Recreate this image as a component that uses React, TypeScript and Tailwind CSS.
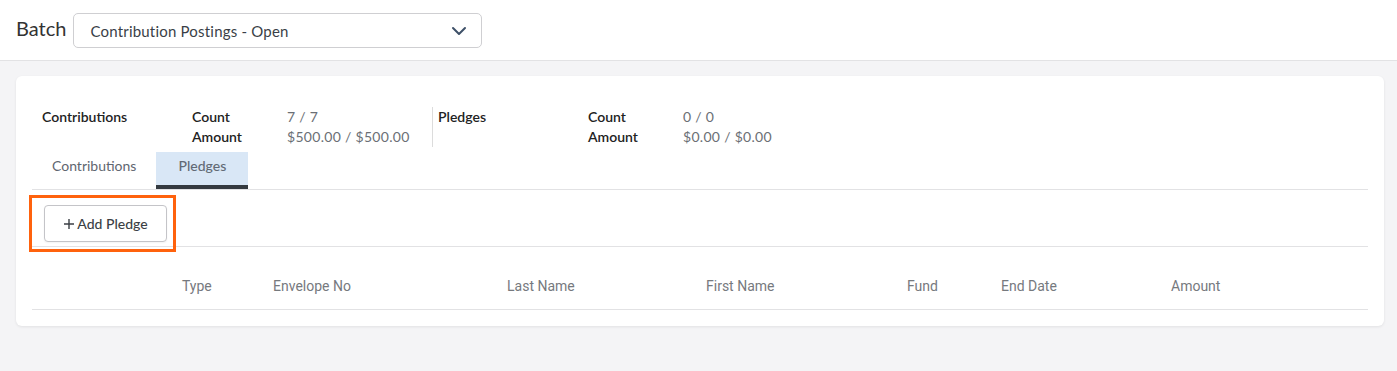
import React from 'react';

const cols = [
  { label: 'Type', w: 'w-[91px]' },
  { label: 'Envelope No', w: 'w-[234px]' },
  { label: 'Last Name', w: 'w-[199px]' },
  { label: 'First Name', w: 'w-[201px]' },
  { label: 'Fund', w: 'w-[94px]' },
  { label: 'End Date', w: 'w-[170px]' },
  { label: 'Amount', w: 'w-[100px]' },
];

const Summary: React.FC<{ title: string; count: string; amount: string }> = ({ title, count, amount }) => (
  <div className="flex text-[14px] leading-[20px]">
    <div className="w-[150px] font-semibold text-[#222]">{title}</div>
    <div className="w-[95px] font-semibold text-[#222]">
      <div>Count</div>
      <div>Amount</div>
    </div>
    <div className="text-[#6b6f75] tracking-[0.3px]">
      <div>{count}</div>
      <div>{amount}</div>
    </div>
  </div>
);

const App: React.FC = () => {
  return (
    <div className="w-[1397px] h-[371px] bg-[#f4f4f6] font-['Lato','Open_Sans',sans-serif] overflow-hidden">
      {/* Batch header */}
      <div className="h-[61px] bg-white border-b border-[#e2e2e4] flex items-center pl-4">
        <span className="text-[20px] text-[#333] mr-[7px] -mt-[5px]">Batch</span>
        <div className="w-[409px] h-[35px] border border-[#cfcfd2] rounded-[5px] flex items-center justify-between pl-[16px] pr-[14px]">
          <span className="text-[15px] text-[#3a3f47] mt-[2px] tracking-[0.2px]">Contribution Postings - Open</span>
          <svg width="16" height="10" viewBox="0 0 16 10" className="mt-[2px]">
            <path d="M2 2 L8 8 L14 2" fill="none" stroke="#3e5068" strokeWidth="2" strokeLinecap="round" strokeLinejoin="round" />
          </svg>
        </div>
      </div>

      {/* Card */}
      <div className="ml-4 w-[1368px] mt-[15px] h-[250px] bg-white rounded-[6px] shadow-[0_1px_3px_rgba(0,0,0,0.08)] px-4 pt-[28px]">
        <div className="flex pl-[10px] pt-[3px]">
          <div className="w-[390px]">
            <Summary title="Contributions" count="7 / 7" amount="$500.00 / $500.00" />
          </div>
          <div className="border-l border-[#dcdcdc] pl-[5px] h-[40px]">
            <Summary title="Pledges" count="0 / 0" amount="$0.00 / $0.00" />
          </div>
        </div>

        {/* Tabs */}
        <div className="flex border-b border-[#e2e2e4] mt-[5px] text-[14px]">
          <div className="pl-[20px] pr-[20px] h-[37px] flex items-start pt-[3px] text-[#5f6670]">Contributions</div>
          <div className="w-[92px] h-[37px] bg-[#d9e7f6] border-b-[4px] border-[#343a40] flex justify-center pt-[3px] text-[#626a75] font-medium">Pledges</div>
        </div>

        {/* Toolbar */}
        <div className="h-[57px] border-b border-[#e2e2e4] relative">
          <div className="absolute left-[-3px] top-[5px] w-[147px] h-[57px] border-[3px] border-[#ff620d]" />
          <button className="absolute left-[12px] top-[15px] w-[123px] h-[37px] border border-[#c4c4c8] rounded-[4px] bg-white flex items-center justify-center gap-[2px] text-[14px] text-[#3b3f45] font-medium shadow-[0_1px_2px_rgba(0,0,0,0.05)]">
            <svg width="12" height="12" viewBox="0 0 12 12" className="mt-[1px]">
              <path d="M6 1 V11 M1 6 H11" stroke="#3b3f45" strokeWidth="1.4" />
            </svg>
            Add Pledge
          </button>
        </div>

        {/* Table header */}
        <div className="flex h-[63px] items-center border-b border-[#e2e2e4] pl-[150px] pt-[17px] font-['Roboto',sans-serif] text-[14px] text-[#76797e]">
          {cols.map(c => (
            <div key={c.label} className={`${c.w} shrink-0`}>{c.label}</div>
          ))}
        </div>
      </div>
    </div>
  );
};

export default App;
